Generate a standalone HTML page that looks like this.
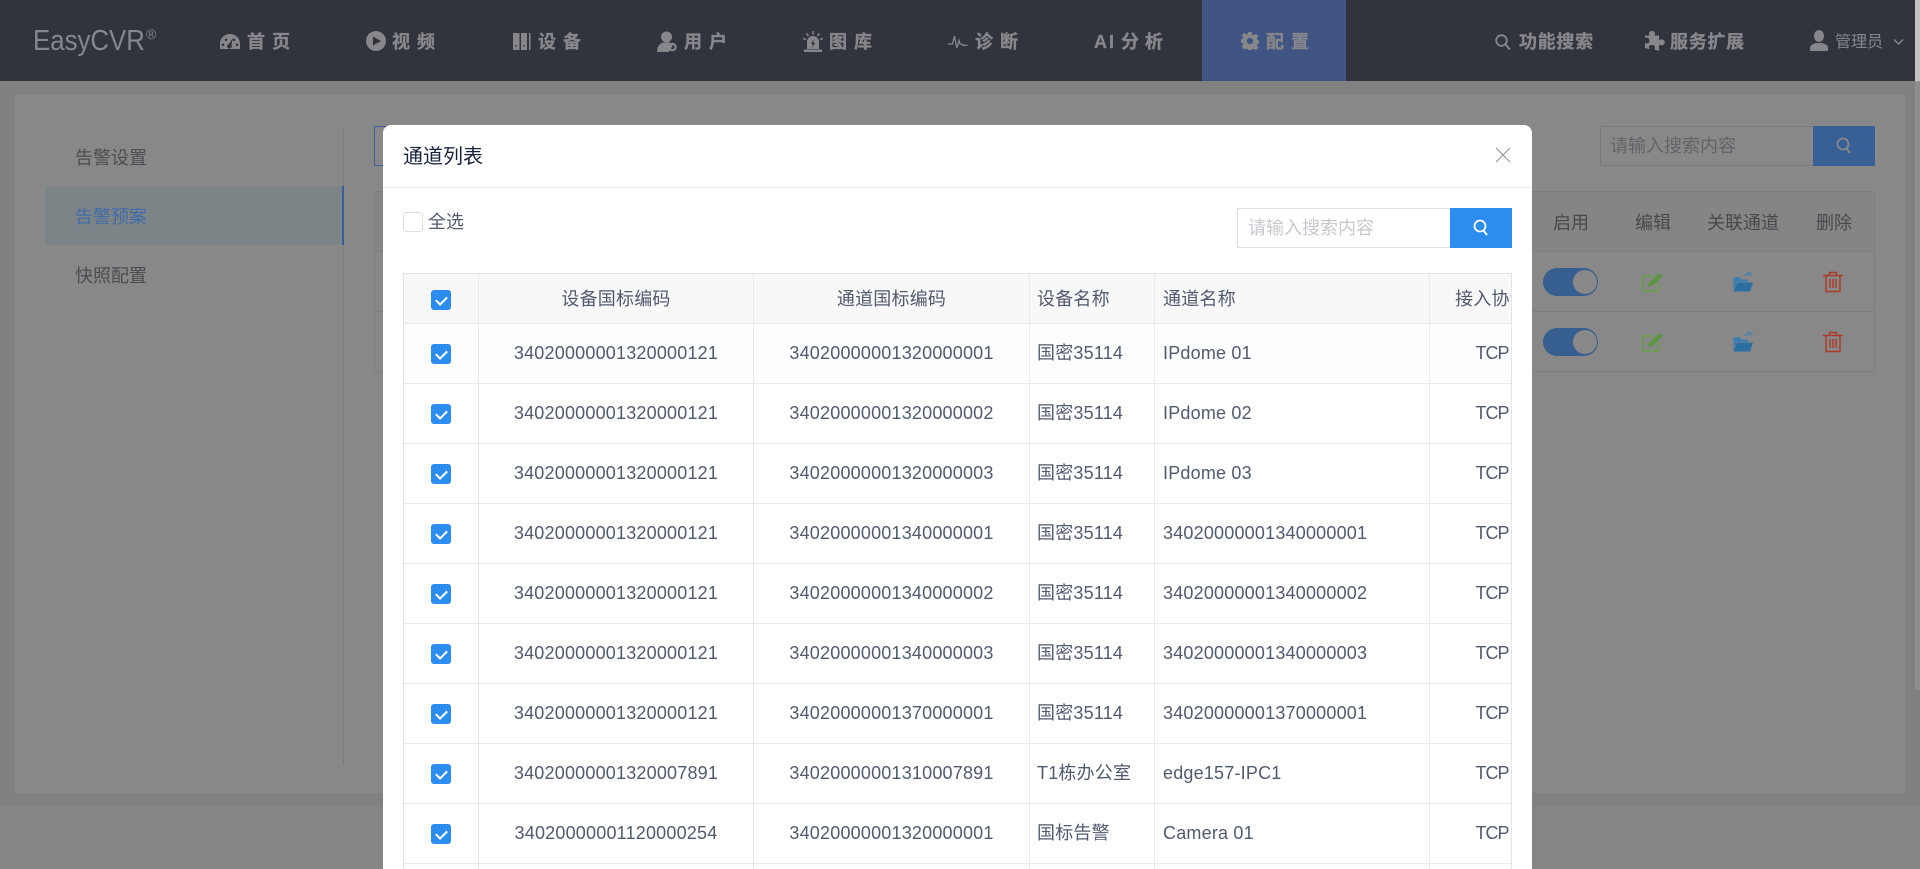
<!DOCTYPE html>
<html lang="zh-CN"><head><meta charset="utf-8"><title>EasyCVR</title>
<style>
html,body{margin:0;padding:0;width:1920px;height:869px;overflow:hidden;background:#818181;font-family:"Liberation Sans","Noto Sans CJK SC",sans-serif}
*{box-sizing:border-box}
#root{position:relative;width:1920px;height:869px;overflow:hidden;background:#818181}
.a{position:absolute;white-space:nowrap}
.nav{font-size:18px;font-weight:700;color:#85878b;line-height:24px;top:30px;letter-spacing:7px;-webkit-text-stroke:.35px #85878b}
.r{letter-spacing:.7px}
svg{position:absolute;display:block}
.side{left:75px;font-size:18px;line-height:24px;color:#4b4d52}
.th2{font-size:18px;line-height:24px;top:211px;color:#47494d;transform:translateX(-50%)}
.sw{left:1543px;width:55px;height:28px;border-radius:14px;background:#365e8f}
.sw i{position:absolute;left:30px;top:2px;width:24px;height:24px;border-radius:12px;background:#888}
#modal{left:383px;top:125px;width:1149px;height:744px;background:#fff;border-radius:8px 8px 0 0;overflow:hidden}
#wrap{position:absolute;left:403px;top:273px;width:1109px;height:596px;border:1px solid #e2e4e8;border-bottom:0;overflow:hidden}
table{border-collapse:separate;border-spacing:0;table-layout:fixed;width:1150px;font-size:18px;line-height:24px;letter-spacing:.2px;color:#515a6e}
th,td{border-right:1px solid #e8eaec;border-bottom:1px solid #e8eaec;padding:0 0 2px;text-align:center;font-weight:400;white-space:nowrap;overflow:hidden}
th{height:50px;background:#f8f8f9;padding:1px 0 0}
td{height:60px}
.l{text-align:left;padding-left:8px}
.n{padding-left:7px}
.t{letter-spacing:-1px;padding-left:1px}
tr.e td{height:5px;padding:0;border-bottom:0;line-height:0;font-size:0}
.cb{display:inline-block;position:relative;width:20px;height:20px;border-radius:3px;background:#2d8cf0;vertical-align:middle}
.cb:after{content:"";position:absolute;left:7px;top:4px;width:5px;height:9px;border:solid #fff;border-width:0 2px 2px 0;transform:rotate(45deg)}
</style></head><body>
<div id="root">

<!-- dimmed page -->
<div class="a" style="left:15px;top:95px;width:1890px;height:698px;background:#888"></div>
<div class="a" style="left:0;top:807px;width:1920px;height:62px;background:#858688"></div>
<div class="a" style="left:1915px;top:81px;width:5px;height:609px;background:#8e8e8e"></div>
<div class="a" style="left:1915px;top:0;width:5px;height:81px;background:#c4c4c4"></div>

<!-- top bar -->
<div class="a" style="left:0;top:0;width:1915px;height:81px;background:#31343d"></div>
<div class="a" style="left:1202px;top:0;width:144px;height:81px;background:#415585"></div>
<div class="a" style="left:33px;top:21px;font-size:29px;line-height:40px;color:#84878c;transform:scaleX(.89);transform-origin:0 50%">EasyCVR</div>
<div class="a" style="left:146px;top:27px;font-size:14px;line-height:14px;color:#84878c">®</div>

<svg style="left:220px;top:33px" width="20" height="17" viewBox="0 0 20 17"><path fill="#85878b" fill-rule="evenodd" d="M0 16V11C0 5 4.500 1 10 1S20 5 20 11v5zM3 10.500a1.300 1.300 0 1 0 .01 0zM6 5.500a1.300 1.300 0 1 0 .01 0zM14 5.500a1.300 1.300 0 1 0 .01 0zM17 10.500a1.300 1.300 0 1 0 .01 0zM12.800 5 9 11a2.300 2.300 0 1 0 2.500 1.200z"/></svg>
<div class="a nav" style="left:247px">首页</div>

<svg style="left:366px;top:31px" width="20" height="20" viewBox="0 0 20 20"><circle cx="10" cy="10" r="10" fill="#85878b"/><path d="M7 5.500 15 10 7 14.500z" fill="#31343d"/></svg>
<div class="a nav" style="left:392px">视频</div>

<svg style="left:513px;top:33px" width="18" height="17" viewBox="0 0 18 17"><path fill="#85878b" d="M0 0h6.500v17H0zM8 0h6v17H8zM16 0h1.500v17H16z"/><path fill="#31343d" d="M2.500 12h1.500v1.500H2.500zM10.300 12h1.500v1.500h-1.500z"/></svg>
<div class="a nav" style="left:538px">设备</div>

<svg style="left:657px;top:31px" width="21" height="21" viewBox="0 0 21 21"><circle cx="9.500" cy="6" r="5.500" fill="#85878b"/><path d="M0 21c0-6 3-9 6.500-9.500h6C15 13 16 14 16 14l-4 7z" fill="#85878b"/><circle cx="15.500" cy="16" r="3.200" fill="none" stroke="#85878b" stroke-width="2.200"/></svg>
<div class="a nav" style="left:684px">用户</div>

<svg style="left:803px;top:31px" width="20" height="21" viewBox="0 0 20 21"><path fill="#85878b" d="M4 18v-7a6 6 0 0 1 12 0v7zM1 18.500h18V21H1z"/><path fill="#31343d" d="M10.800 8 7.800 13h2l-1 4 3.500-5.200h-2.100z"/><path stroke="#85878b" stroke-width="1.500" d="M10 0v3.500M3.500 2.500l2 2.500M16.500 2.500l-2 2.500M0 7.500l3 1M20 7.500l-3 1"/></svg>
<div class="a nav" style="left:829px">图库</div>

<svg style="left:948px;top:34px" width="20" height="15" viewBox="0 0 20 15"><path fill="none" stroke="#85878b" stroke-width="1.300" d="M0 10h4.500L6.500 2l2.300 12L11 6.500l1 3.500h1.500l1 1.200h5"/></svg>
<div class="a nav" style="left:975px">诊断</div>

<div class="a nav" style="left:1094px;letter-spacing:2px">AI<span style="letter-spacing:6px;margin-left:5px">分析</span></div>

<svg style="left:1241px;top:32px" width="18" height="18" viewBox="0 0 18 18"><path fill="#85878b" fill-rule="evenodd" d="M7.300 0h3.400l.5 2.600 1.500.7 2.300-1.500 2.300 2.400-1.500 2.200.7 1.600 2 .4v3.200l-2 .5-.7 1.500 1.500 2.300-2.300 2.300-2.300-1.500-1.500.7-.5 2.600H7.300l-.5-2.600-1.500-.7L3 17.200.7 14.900l1.500-2.300-.7-1.500-1.500-.5V7.400l1.500-.4.700-1.600L.7 3.200 3 .8l2.300 1.500 1.500-.7zM9 5.800a3.200 3.200 0 1 0 .01 0z"/></svg>
<div class="a nav" style="left:1266px">配置</div>

<svg style="left:1495px;top:34px" width="16" height="16" viewBox="0 0 16 16"><circle cx="6.500" cy="6.500" r="5.300" fill="none" stroke="#85878b" stroke-width="1.800"/><path d="M10.500 10.500 15 15.500" stroke="#85878b" stroke-width="2"/></svg>
<div class="a nav r" style="left:1519px">功能搜索</div>

<svg style="left:1645px;top:31px" width="20" height="20" viewBox="0 0 20 20"><path fill="#85878b" d="M7 0c2 0 3 1.200 3 2.500 0 .8-.4 1.200-.4 2H14v4.500c.8 0 1.300-.6 2.300-.6 2 0 3.500 1.300 3.500 3s-1.500 3-3.500 3c-1 0-1.500-.5-2.300-.5V20l-4.500-1.500c0-1 .5-1.400.5-2.200 0-1.300-1.200-2.300-3-2.300s-3 .7-3 2c0 .8.500 1.300.5 2.200L0 17v-5c.8 0 1.200.5 2 .5 1.300 0 2.500-1.300 2.500-3S3 6.500 1.500 6.500C1 6.500.5 7 0 7V4.500h4.500c0-.8-.5-1.200-.5-2C4 1.200 5 0 7 0z"/></svg>
<div class="a nav r" style="left:1670px">服务扩展</div>

<svg style="left:1810px;top:30px" width="18" height="21" viewBox="0 0 18 21"><ellipse cx="9" cy="6" rx="5" ry="6" fill="#85878b"/><path d="M0 21v-3c0-3 3-4 6-5h6c3 1 6 2 6 5v3z" fill="#85878b"/></svg>
<div class="a" style="left:1835px;top:31px;font-size:16px;line-height:24px;color:#85878b">管理员</div>
<svg style="left:1893px;top:38px" width="11" height="8" viewBox="0 0 11 8"><path d="M1 1.500 5.500 6 10 1.500" fill="none" stroke="#85878b" stroke-width="1.500"/></svg>

<!-- sidebar behind -->
<div class="a" style="left:343px;top:126px;width:1px;height:639px;background:#7d7d7d"></div>
<div class="a" style="left:45px;top:186px;width:299px;height:59px;background:#7d8488;border-right:2px solid #36609f"></div>
<div class="a side" style="top:146px">告警设置</div>
<div class="a side" style="top:205px;color:#3f6ba8">告警预案</div>
<div class="a side" style="top:264px">快照配置</div>

<!-- content behind -->
<div class="a" style="left:374px;top:126px;width:30px;height:40px;border:1px solid #4060a0"></div>
<div class="a" style="left:374px;top:191px;width:1501px;height:181px;border:1px solid #7e7e7e"></div>
<div class="a" style="left:375px;top:192px;width:1499px;height:59px;background:#858585"></div>
<div class="a" style="left:374px;top:251px;width:1501px;height:1px;background:#7e7e7e"></div>
<div class="a" style="left:374px;top:311px;width:1501px;height:1px;background:#7e7e7e"></div>
<div class="a" style="left:1600px;top:126px;width:214px;height:40px;border:1px solid #777a7f;border-right:0"></div>
<div class="a" style="left:1610px;top:134px;font-size:18px;line-height:24px;color:#63646a">请输入搜索内容</div>
<div class="a" style="left:1813px;top:126px;width:62px;height:40px;background:#396094"></div>
<svg style="left:1836px;top:137px" width="16" height="18" viewBox="0 0 16 18"><circle cx="7" cy="7" r="5.500" fill="none" stroke="#84878c" stroke-width="1.800"/><path d="M10.500 11.500 14 16" stroke="#84878c" stroke-width="2"/></svg>

<div class="a th2" style="left:1571px">启用</div>
<div class="a th2" style="left:1653px">编辑</div>
<div class="a th2" style="left:1743px">关联通道</div>
<div class="a th2" style="left:1834px">删除</div>

<div class="a sw" style="top:268px"><i></i></div>
<div class="a sw" style="top:328px"><i></i></div>

<svg style="left:1642px;top:271px" width="22" height="22" viewBox="0 0 22 22"><path d="M11.500 5H.9v15h15.700V10.500" fill="none" stroke="#6c9a50" stroke-width="1.800"/><path d="M6.500 15.500 7.500 11.500 17.500 2.500 20.300 5 10.500 14.500z" fill="#5f9448" stroke="#5f9448" stroke-width="1"/></svg>
<svg style="left:1642px;top:331px" width="22" height="22" viewBox="0 0 22 22"><path d="M11.500 5H.9v15h15.700V10.500" fill="none" stroke="#6c9a50" stroke-width="1.800"/><path d="M6.500 15.500 7.500 11.500 17.500 2.500 20.300 5 10.500 14.500z" fill="#5f9448" stroke="#5f9448" stroke-width="1"/></svg>
<svg style="left:1733px;top:272px" width="21" height="20" viewBox="0 0 21 20"><path d="M.5 19V5h6l2 2.500h6.500V10H4.500L.5 19z" fill="#3d80b0"/><path d="M4.500 10.500H20L17 19.500H.5z" fill="#2a6f9f"/><path d="M11 3.500c2.500-1.500 5-1.500 7 .5M14 .8c2-.5 4 0 5.500 1.700" fill="none" stroke="#3d80b0" stroke-width="1.100"/></svg>
<svg style="left:1733px;top:332px" width="21" height="20" viewBox="0 0 21 20"><path d="M.5 19V5h6l2 2.500h6.500V10H4.500L.5 19z" fill="#3d80b0"/><path d="M4.500 10.500H20L17 19.500H.5z" fill="#2a6f9f"/><path d="M11 3.500c2.500-1.500 5-1.500 7 .5M14 .8c2-.5 4 0 5.500 1.700" fill="none" stroke="#3d80b0" stroke-width="1.100"/></svg>
<svg style="left:1823px;top:271px" width="20" height="22" viewBox="0 0 20 22"><path d="M0 4.500h20M6.500 4V1.500h7V4M3 5v15.500h14V5M7 8v9M10 8v9M13 8v9" fill="none" stroke="#a83c28" stroke-width="1.500"/></svg>
<svg style="left:1823px;top:331px" width="20" height="22" viewBox="0 0 20 22"><path d="M0 4.500h20M6.500 4V1.500h7V4M3 5v15.500h14V5M7 8v9M10 8v9M13 8v9" fill="none" stroke="#a83c28" stroke-width="1.500"/></svg>

<!-- modal -->
<div class="a" id="modal"></div>
<div class="a" style="left:383px;top:187px;width:1149px;height:1px;background:#e8eaec"></div>
<div class="a" style="left:403px;top:143px;font-size:20px;line-height:28px;color:#17233d">通道列表</div>
<svg style="left:1495px;top:147px" width="16" height="16" viewBox="0 0 16 16"><path d="M1 1 15 15M15 1 1 15" stroke="#999" stroke-width="1.200"/></svg>

<div class="a" style="left:403px;top:212px;width:20px;height:20px;border:1px solid #dcdee2;border-radius:3px;background:#fff"></div>
<div class="a" style="left:428px;top:210px;font-size:18px;line-height:24px;color:#515a6e">全选</div>

<div class="a" style="left:1237px;top:208px;width:214px;height:40px;border:1px solid #dcdee2;border-right:0;background:#fff"></div>
<div class="a" style="left:1248px;top:216px;font-size:18px;line-height:24px;color:#c5c8ce">请输入搜索内容</div>
<div class="a" style="left:1450px;top:208px;width:62px;height:40px;background:#2d8cf0"></div>
<svg style="left:1473px;top:219px" width="16" height="18" viewBox="0 0 16 18"><circle cx="7" cy="7" r="5.500" fill="none" stroke="#fff" stroke-width="1.800"/><path d="M10.500 11.500 14 16" stroke="#fff" stroke-width="2"/></svg>

<div id="wrap"><table>
<colgroup><col style="width:75px"><col style="width:275px"><col style="width:276px"><col style="width:125px"><col style="width:275px"><col style="width:124px"></colgroup>
<tr><th><span class="cb"></span></th><th>设备国标编码</th><th>通道国标编码</th><th class="l n">设备名称</th><th class="l">通道名称</th><th>接入协议</th></tr>
<tr style="background:#fcfdfe"><td><span class="cb"></span></td><td>34020000001320000121</td><td>34020000001320000001</td><td class="l n">国密35114</td><td class="l">IPdome 01</td><td class="t">TCP</td></tr>
<tr><td><span class="cb"></span></td><td>34020000001320000121</td><td>34020000001320000002</td><td class="l n">国密35114</td><td class="l">IPdome 02</td><td class="t">TCP</td></tr>
<tr><td><span class="cb"></span></td><td>34020000001320000121</td><td>34020000001320000003</td><td class="l n">国密35114</td><td class="l">IPdome 03</td><td class="t">TCP</td></tr>
<tr><td><span class="cb"></span></td><td>34020000001320000121</td><td>34020000001340000001</td><td class="l n">国密35114</td><td class="l">34020000001340000001</td><td class="t">TCP</td></tr>
<tr><td><span class="cb"></span></td><td>34020000001320000121</td><td>34020000001340000002</td><td class="l n">国密35114</td><td class="l">34020000001340000002</td><td class="t">TCP</td></tr>
<tr><td><span class="cb"></span></td><td>34020000001320000121</td><td>34020000001340000003</td><td class="l n">国密35114</td><td class="l">34020000001340000003</td><td class="t">TCP</td></tr>
<tr><td><span class="cb"></span></td><td>34020000001320000121</td><td>34020000001370000001</td><td class="l n">国密35114</td><td class="l">34020000001370000001</td><td class="t">TCP</td></tr>
<tr><td><span class="cb"></span></td><td>34020000001320007891</td><td>34020000001310007891</td><td class="l n">T1栋办公室</td><td class="l">edge157-IPC1</td><td class="t">TCP</td></tr>
<tr><td><span class="cb"></span></td><td>34020000001120000254</td><td>34020000001320000001</td><td class="l n">国标告警</td><td class="l">Camera 01</td><td class="t">TCP</td></tr>
<tr class="e"><td></td><td></td><td></td><td></td><td></td><td></td></tr>
</table></div>

</div>
</body></html>
